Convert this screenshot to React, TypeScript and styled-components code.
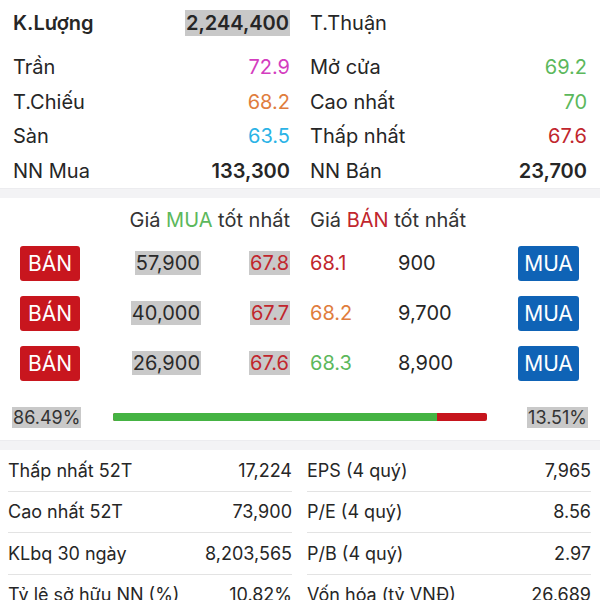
import styled, { createGlobalStyle } from 'styled-components';

const GlobalStyle = createGlobalStyle`
  body {
    margin: 0;
    background: #ffffff;
    font-family: 'Inter', 'Noto Sans', sans-serif;
    color: #262626;
  }
`;

const Page = styled.div`
  width: 600px;
  height: 600px;
  overflow: hidden;
  background: #fff;
`;

const Separator = styled.div`
  height: 9px;
  background: #f3f3f5;
  border-top: 1px solid #ececef;
`;

const Summary = styled.div`
  display: grid;
  grid-template-columns: 1fr 1fr;
  column-gap: 20px;
  padding: 6px 13px 0;
`;

const SummaryCol = styled.div`
  display: flex;
  flex-direction: column;
`;

const SummaryRow = styled.div<{ $head?: boolean; $plain?: boolean }>`
  display: flex;
  align-items: center;
  justify-content: space-between;
  height: 34.5px;
  font-size: 20px;
  margin-bottom: ${(p) => (p.$head ? '9.5px' : '0')};
  font-weight: ${(p) => (p.$head && !p.$plain ? 600 : 400)};
`;

const Value = styled.span<{ color?: string; $bold?: boolean; $shade?: boolean }>`
  color: ${(p) => p.color || '#262626'};
  font-weight: ${(p) => (p.$bold ? 600 : 'inherit')};
  background: ${(p) => (p.$shade ? '#c8c8c8' : 'transparent')};
  padding: ${(p) => (p.$shade ? '1px 1px' : '0')};
`;

const Orders = styled.div`
  padding: 0 13px;
  height: 242px;
  box-sizing: border-box;
  display: flex;
  flex-direction: column;
`;

const OrderGrid = styled.div`
  display: grid;
  grid-template-columns: 1fr 1fr;
  column-gap: 20px;
  font-size: 20px;
`;

const Header = styled.div<{ $align: 'left' | 'right' }>`
  height: 40px;
  box-sizing: border-box;
  padding-top: 3px;
  display: flex;
  align-items: center;
  justify-content: ${(p) => (p.$align === 'right' ? 'flex-end' : 'flex-start')};
  color: #333;
  font-size: 20px;
`;

const Accent = styled.span<{ color: string }>`
  color: ${(p) => p.color};
`;

const BidRow = styled.div`
  display: grid;
  grid-template-columns: 67px 1fr 89px;
  align-items: center;
  height: 50px;
`;

const AskRow = styled.div`
  display: grid;
  grid-template-columns: 88px 1fr 69px;
  align-items: center;
  height: 50px;
`;

const Cell = styled.span<{ $end?: boolean; color?: string }>`
  display: flex;
  justify-content: ${(p) => (p.$end ? 'flex-end' : 'flex-start')};
  color: ${(p) => p.color || '#262626'};
`;

const Action = styled.button<{ $kind: 'sell' | 'buy' }>`
  width: ${(p) => (p.$kind === 'sell' ? '60px' : '61px')};
  height: 35px;
  border: 0;
  border-radius: 3px;
  margin-left: ${(p) => (p.$kind === 'sell' ? '7px' : '0')};
  background: ${(p) => (p.$kind === 'sell' ? '#c8161e' : '#0f63b6')};
  color: #fff;
  font-family: inherit;
  font-size: 21px;
  padding: 0;
`;

const Shade = styled.span<{ color?: string }>`
  background: #c9c9c9;
  color: ${(p) => p.color || '#2a2a2a'};
  padding: 1px 1px;
  line-height: 22px;
`;

const Ratio = styled.div`
  display: flex;
  align-items: center;
  height: 44px;
  margin: 7px -1px 0;
  font-size: 18px;
`;

const Percent = styled.span`
  background: #c9c9c9;
  color: #333;
  line-height: 21px;
  padding: 0 1px;
`;

const Track = styled.div`
  width: 374px;
  height: 8px;
  margin-left: 32px;
  margin-right: auto;
  border-radius: 2px;
  overflow: hidden;
  background: #c6151d;
  display: flex;
`;

const Fill = styled.div`
  height: 100%;
  background: #45b343;
`;

const Stats = styled.div`
  display: grid;
  grid-template-columns: 1fr 1fr;
  column-gap: 15px;
  padding: 0 9px 0 8px;
`;

const StatCol = styled.div`
  display: flex;
  flex-direction: column;
`;

const StatRow = styled.div`
  display: flex;
  align-items: center;
  justify-content: space-between;
  height: 40.5px;
  font-size: 18px;
  color: #262626;
  & + & {
    border-top: 1px solid #e3e3e3;
  }
`;

const C = {
  pink: '#d43dbf',
  orange: '#e07d3d',
  cyan: '#2bb3e6',
  green: '#5cb85c',
  red: '#c1262d',
};

const leftSummary = [
  { label: 'Trần', value: '72.9', color: C.pink },
  { label: 'T.Chiếu', value: '68.2', color: C.orange },
  { label: 'Sàn', value: '63.5', color: C.cyan },
];
const rightSummary = [
  { label: 'Mở cửa', value: '69.2', color: C.green },
  { label: 'Cao nhất', value: '70', color: C.green },
  { label: 'Thấp nhất', value: '67.6', color: C.red },
];

const bids = [
  { vol: '57,900', price: '67.8' },
  { vol: '40,000', price: '67.7' },
  { vol: '26,900', price: '67.6' },
];
const asks = [
  { price: '68.1', vol: '900', color: C.red },
  { price: '68.2', vol: '9,700', color: C.orange },
  { price: '68.3', vol: '8,900', color: C.green },
];

const leftStats = [
  ['Thấp nhất 52T', '17,224'],
  ['Cao nhất 52T', '73,900'],
  ['KLbq 30 ngày', '8,203,565'],
  ['Tỷ lệ sở hữu NN (%)', '10.82%'],
];
const rightStats = [
  ['EPS (4 quý)', '7,965'],
  ['P/E (4 quý)', '8.56'],
  ['P/B (4 quý)', '2.97'],
  ['Vốn hóa (tỷ VNĐ)', '26,689'],
];

const buyShare = 86.49;

export default function App() {
  return (
    <Page>
      <GlobalStyle />
      <Summary>
        <SummaryCol>
          <SummaryRow $head>
            <span>K.Lượng</span>
            <Value $shade>2,244,400</Value>
          </SummaryRow>
          {leftSummary.map((r) => (
            <SummaryRow key={r.label}>
              <span>{r.label}</span>
              <Value color={r.color}>{r.value}</Value>
            </SummaryRow>
          ))}
          <SummaryRow>
            <span>NN Mua</span>
            <Value $bold>133,300</Value>
          </SummaryRow>
        </SummaryCol>
        <SummaryCol>
          <SummaryRow $head $plain>
            <span>T.Thuận</span>
          </SummaryRow>
          {rightSummary.map((r) => (
            <SummaryRow key={r.label}>
              <span>{r.label}</span>
              <Value color={r.color}>{r.value}</Value>
            </SummaryRow>
          ))}
          <SummaryRow>
            <span>NN Bán</span>
            <Value $bold>23,700</Value>
          </SummaryRow>
        </SummaryCol>
      </Summary>
      <Separator />
      <Orders>
        <OrderGrid>
          <div>
            <Header $align="right">
              Giá&nbsp;<Accent color={C.green}>MUA</Accent>&nbsp;tốt nhất
            </Header>
            {bids.map((b) => (
              <BidRow key={b.vol}>
                <Action $kind="sell">BÁN</Action>
                <Cell $end>
                  <Shade>{b.vol}</Shade>
                </Cell>
                <Cell $end>
                  <Shade color={C.red}>{b.price}</Shade>
                </Cell>
              </BidRow>
            ))}
          </div>
          <div>
            <Header $align="left">
              Giá&nbsp;<Accent color={C.red}>BÁN</Accent>&nbsp;tốt nhất
            </Header>
            {asks.map((a) => (
              <AskRow key={a.price}>
                <Cell color={a.color}>{a.price}</Cell>
                <Cell>{a.vol}</Cell>
                <Action $kind="buy">MUA</Action>
              </AskRow>
            ))}
          </div>
        </OrderGrid>
        <Ratio>
          <Percent>86.49%</Percent>
          <Track>
            <Fill style={{ width: `${buyShare}%` }} />
          </Track>
          <Percent>13.51%</Percent>
        </Ratio>
      </Orders>
      <Separator />
      <Stats>
        <StatCol>
          {leftStats.map(([l, v]) => (
            <StatRow key={l}>
              <span>{l}</span>
              <span>{v}</span>
            </StatRow>
          ))}
        </StatCol>
        <StatCol>
          {rightStats.map(([l, v]) => (
            <StatRow key={l}>
              <span>{l}</span>
              <span>{v}</span>
            </StatRow>
          ))}
        </StatCol>
      </Stats>
    </Page>
  );
}
